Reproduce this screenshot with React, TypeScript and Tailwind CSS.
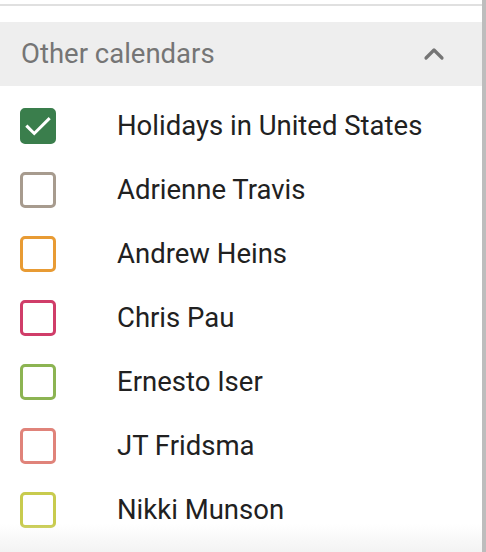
import { ChevronUp } from 'lucide-react';

type Calendar = {
  name: string;
  color: string;
  checked?: boolean;
};

const CALENDARS: Calendar[] = [
  { name: 'Holidays in United States', color: 'border-[#3a7e4c] bg-[#3a7e4c]', checked: true },
  { name: 'Adrienne Travis', color: 'border-[#a79b8e]' },
  { name: 'Andrew Heins', color: 'border-[#e89b34]' },
  { name: 'Chris Pau', color: 'border-[#d03d69]' },
  { name: 'Ernesto Iser', color: 'border-[#8cb452]' },
  { name: 'JT Fridsma', color: 'border-[#e0837a]' },
  { name: 'Nikki Munson', color: 'border-[#c8cb4e]' },
];

function CalendarRow({ calendar }: { calendar: Calendar }) {
  return (
    <div className="flex h-16 items-center">
      <div className="flex w-[117px] shrink-0 pl-5">
        <div
          className={`flex h-9 w-9 items-center justify-center rounded-[5px] border-[3px] ${calendar.color}`}
        >
          {calendar.checked && (
            <svg viewBox="0 0 24 24" className="h-8 w-8" fill="none">
              <path d="M3.5 12.5l5.5 5.5 11.5-11.5" stroke="white" strokeWidth="2.4" strokeLinecap="square" />
            </svg>
          )}
        </div>
      </div>
      <span className="text-[27.5px] leading-8 text-[#212121]">{calendar.name}</span>
    </div>
  );
}

export default function App() {
  return (
    <div className="flex h-[552px] w-[486px] overflow-hidden bg-white font-['Roboto',sans-serif]">
      <div className="relative flex min-w-0 flex-1 flex-col">
        <div className="mt-1 h-0.5 bg-[#e0e0e0]" />
        <div className="mt-4 flex h-16 items-center justify-between bg-[#eeeeee] pl-[21px] pr-8">
          <span className="text-[27.5px] leading-8 text-[#757575]">Other calendars</span>
          <ChevronUp className="h-8 w-8 text-[#757575]" strokeWidth={2.4} />
        </div>
        <div className="pt-2">
          {CALENDARS.map((calendar) => (
            <CalendarRow key={calendar.name} calendar={calendar} />
          ))}
        </div>
        <div className="pointer-events-none absolute bottom-0 left-0 right-0 h-7 bg-gradient-to-b from-white/0 to-[#f3f3f3]" />
      </div>
      <div className="w-1 bg-[#bdbdbd]" />
    </div>
  );
}
